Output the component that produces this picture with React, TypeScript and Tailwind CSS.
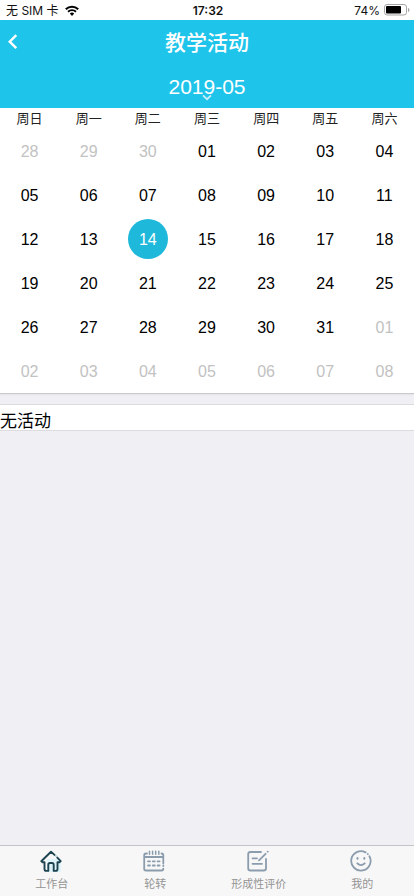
import { ReactNode, useState } from 'react';
import clsx from 'clsx';

const weekdays = ['周日', '周一', '周二', '周三', '周四', '周五', '周六'];

const weeks = [
  ['04-28', '04-29', '04-30', '05-01', '05-02', '05-03', '05-04'],
  ['05-05', '05-06', '05-07', '05-08', '05-09', '05-10', '05-11'],
  ['05-12', '05-13', '05-14', '05-15', '05-16', '05-17', '05-18'],
  ['05-19', '05-20', '05-21', '05-22', '05-23', '05-24', '05-25'],
  ['05-26', '05-27', '05-28', '05-29', '05-30', '05-31', '06-01'],
  ['06-02', '06-03', '06-04', '06-05', '06-06', '06-07', '06-08'],
];

function StatusBar() {
  return (
    <div className="grid h-5 grid-cols-3 items-center bg-white pt-0.5 pr-1 pl-1.5 font-['Inter','Noto_Sans_CJK_SC',sans-serif] text-xs text-[#111]">
      <div className="flex items-center gap-1.5">
        <span>无 SIM 卡</span>
        <svg className="mb-0.5" width="14" height="11" viewBox="0 0 14 11" aria-hidden="true">
          <path d="M.8 4.2a9 9 0 0 1 12.4 0" fill="none" stroke="#000" strokeWidth="2.1" />
          <path d="M3 6.7a5.8 5.8 0 0 1 8 0" fill="none" stroke="#000" strokeWidth="1.9" />
          <path d="M4.8 8.6a3.2 3.2 0 0 1 4.4 0L7 10.9z" fill="#000" />
        </svg>
      </div>
      <span className="text-center font-semibold">17:32</span>
      <div className="flex items-center justify-end gap-1">
        <span>74%</span>
        <svg className="mb-0.5" width="26" height="12" viewBox="0 0 26 12" aria-hidden="true">
          <rect x=".5" y=".5" width="22" height="10.5" rx="2.6" fill="none" stroke="#a3a3a3" />
          <rect x="2" y="2" width="15" height="7.5" rx="1" fill="#000" />
          <path d="M24 4v4c.9-.3 1.4-1.1 1.4-2S24.9 4.3 24 4z" fill="#a3a3a3" />
        </svg>
      </div>
    </div>
  );
}

function Header() {
  return (
    <header className="bg-[#1fc4ea] text-white">
      <div className="grid h-11 grid-cols-[40px_1fr_40px] items-center">
        <button type="button" aria-label="返回" className="flex h-11 items-center pl-2">
          <svg width="10" height="16" viewBox="0 0 10 16" fill="none" stroke="currentColor" strokeWidth="2.4">
            <path d="M8.3 1.2 1.7 7.7l6.6 6.5" />
          </svg>
        </button>
        <h1 className="pt-0.5 text-center text-[21px] leading-7 font-medium">教学活动</h1>
      </div>
      <button type="button" className="flex h-11 w-full flex-col items-center pt-[13px]">
        <span className="text-[21px] leading-5">2019-05</span>
        <svg
          className="-mt-1"
          width="10"
          height="8"
          viewBox="0 0 10 8"
          fill="none"
          stroke="#c9f1fb"
          strokeWidth="1.7"
          aria-hidden="true"
        >
          <path d="m1 2.3 4 3.9 4-3.9" />
        </svg>
      </button>
    </header>
  );
}

function Calendar() {
  const [selected, setSelected] = useState('05-14');

  return (
    <section className="border-b border-[#c8c8cc] bg-white shadow-xs">
      <table className="w-full table-fixed border-collapse text-center">
        <thead>
          <tr>
            {weekdays.map((day) => (
              <th key={day} scope="col" className="p-0 pt-px text-[13px] leading-5 font-normal text-[#222]">
                {day}
              </th>
            ))}
          </tr>
        </thead>
        <tbody>
          {weeks.map((week) => (
            <tr key={week[0]} className="h-11">
              {week.map((date) => (
                <td key={date} className="p-0">
                  <button
                    type="button"
                    onClick={() => setSelected(date)}
                    className={clsx(
                      'mx-auto flex size-10 items-center justify-center rounded-full pt-0.5 text-base',
                      date === selected && 'bg-[#1db8da] text-white',
                      date !== selected && (date.startsWith('05') ? 'text-black' : 'text-[#c2c2c2]'),
                    )}
                  >
                    {date.slice(3)}
                  </button>
                </td>
              ))}
            </tr>
          ))}
        </tbody>
      </table>
    </section>
  );
}

const tabs: { label: string; icon: ReactNode }[] = [
  {
    label: '工作台',
    icon: (
      <>
        <path d="M7 9h14v13H7z" fill="#def6fb" stroke="none" />
        <path
          d="M14.5 4.900 11 1.700 1.300 11.200l1 1H4.500V19q0 1.900 1.900 1.900h1.900v-6.200q0-1.700 1.700-1.700h2q1.700 0 1.700 1.700v6.200h1.900q1.900 0 1.900-1.900v-6.800h2.200l1-1L17.300 7.600"
          stroke="#1d4450"
          strokeWidth="1.9"
        />
        <path d="M16 5.900v.2" stroke="#5fa9b8" strokeWidth="1.5" />
      </>
    ),
  },
  {
    label: '轮转',
    icon: (
      <>
        <path d="M4 3.500H3q-1.800 0-1.800 1.800v13.400q0 1.800 1.800 1.800h15.500q1.800 0 1.800-1.800M18.500 3.500q1.800 0 1.800 1.800v8M20.300 15.500v.6M1.200 7h19" />
        <path d="M6.500 1.300v3M9.600 1.300v3M12.700 1.300v3M15.800 1.300v3" strokeWidth="1.5" />
        <path d="M5 11.300h2M9.800 11.300h2M14.600 11.300h2M5 15.500h2M9.800 15.500h2M14.600 15.500h2" />
      </>
    ),
  },
  {
    label: '形成性评价',
    icon: (
      <>
        <path d="M14 2H3.500Q1.200 2 1.200 4.300v13.900q0 2.300 2.300 2.300h13.200q2.300 0 2.300-2.300V8.800" />
        <path d="m12 10.300 6.600-6.500M20.700 1.700l.1-.1M5.500 8.300H10M5.500 13.800h9.500" />
      </>
    ),
  },
  {
    label: '我的',
    icon: (
      <>
        <path d="M19.400 6.200A9.700 9.700 0 1 1 15.600 2.400M17.800 4v.1" />
        <path d="M7.500 8v.8M14.300 8v.8" strokeWidth="2" />
        <path d="M7.300 13.300q3.700 3.600 7.400 0" />
      </>
    ),
  },
];

function TabBar() {
  return (
    <nav className="grid h-[51px] grid-cols-4 border-t border-[#c4c4c8] bg-[#f7f7f7]">
      {tabs.map(({ label, icon }) => (
        <button key={label} type="button" className="flex flex-col items-center pt-1">
          <svg
            className="mr-0.5"
            width="22"
            height="22"
            viewBox="0 0 22 22"
            fill="none"
            stroke="#8b9cad"
            strokeWidth="1.8"
            strokeLinecap="round"
            strokeLinejoin="round"
            aria-hidden="true"
          >
            {icon}
          </svg>
          <span className="mt-1 text-[11px] leading-4 text-[#949494]">{label}</span>
        </button>
      ))}
    </nav>
  );
}

export default function App() {
  return (
    <div className="flex min-h-screen flex-col bg-[#efeff4] font-['Liberation_Sans','Noto_Sans_CJK_SC',sans-serif]">
      <StatusBar />
      <Header />
      <main className="flex-1">
        <Calendar />
        <section className="mt-2.5 border-y border-[#dcdce0] bg-white pt-2 text-[17px] leading-[17px] text-black">
          <p>无活动</p>
        </section>
      </main>
      <TabBar />
    </div>
  );
}
